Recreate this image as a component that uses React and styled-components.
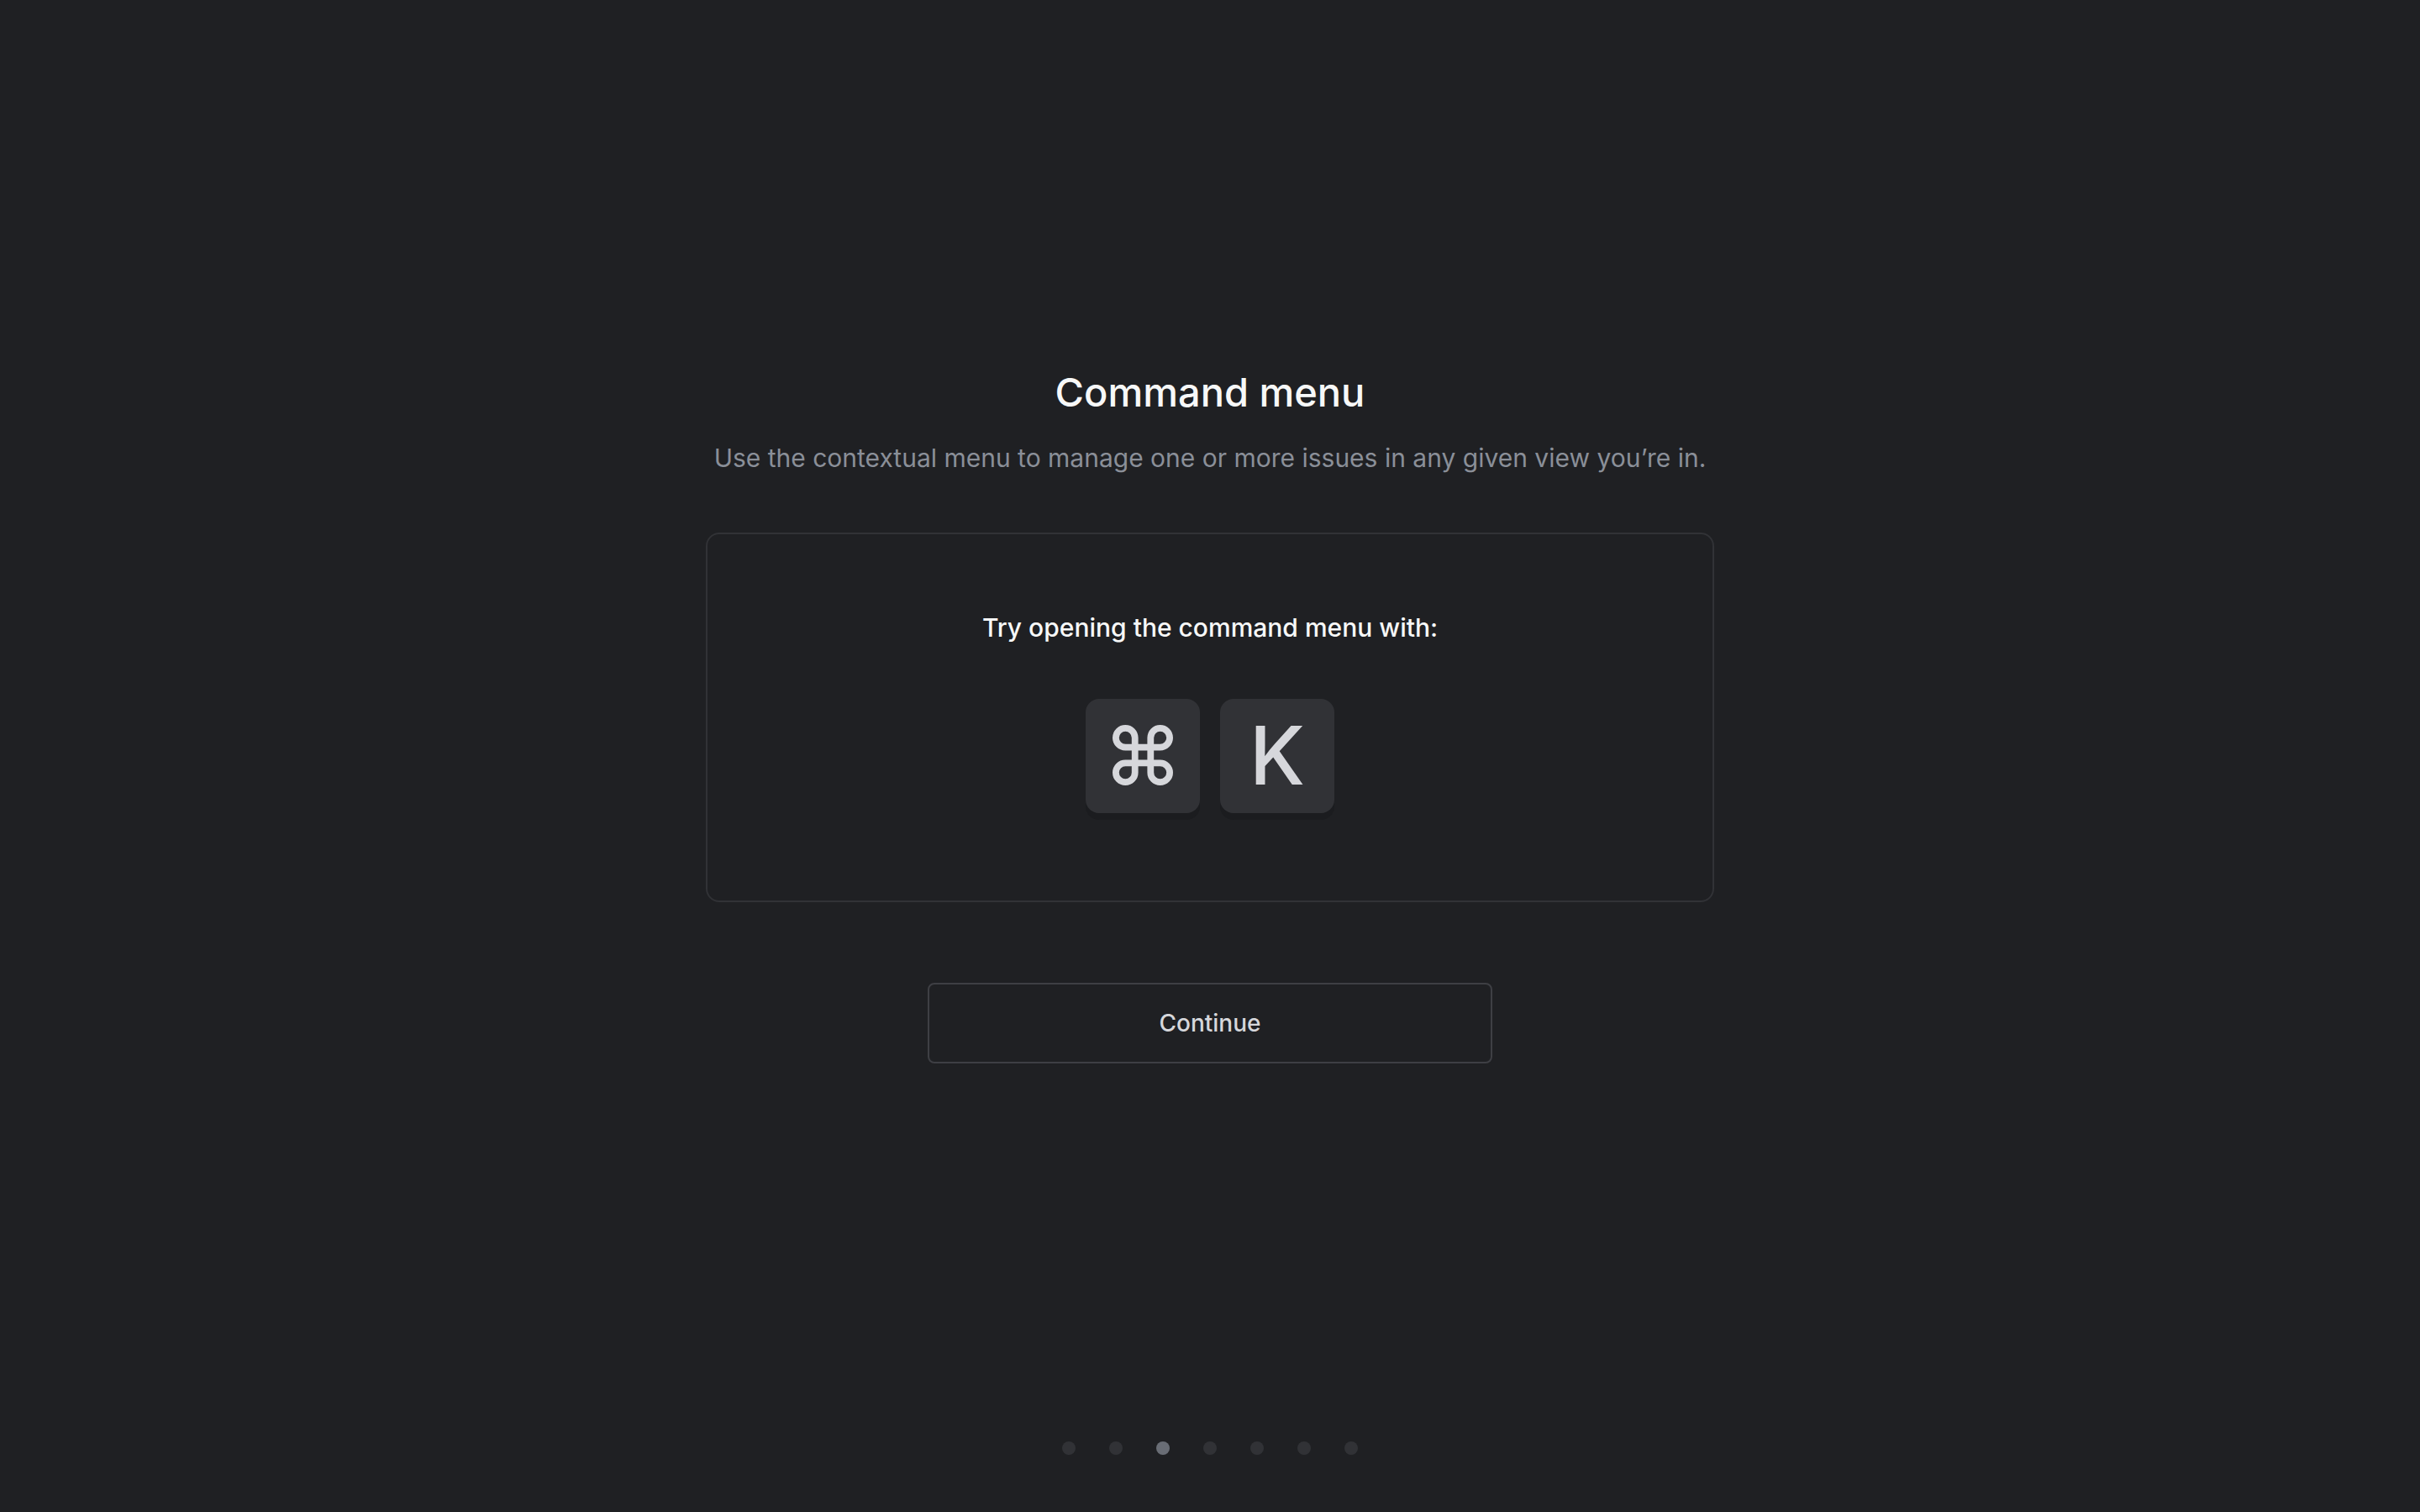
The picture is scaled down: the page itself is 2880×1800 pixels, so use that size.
import React from "react";
import styled, { createGlobalStyle } from "styled-components";

const GlobalStyle = createGlobalStyle`
  *, *::before, *::after {
    box-sizing: border-box;
  }

  body {
    margin: 0;
    background: #1f2023;
    color: #f7f8f8;
    font-family: Inter, "Liberation Sans", sans-serif;
  }
`;

const Page = styled.div`
  display: flex;
  flex-direction: column;
  min-height: 100vh;
`;

const Content = styled.main`
  flex: 1;
  display: flex;
  flex-direction: column;
  align-items: center;
  justify-content: center;
  padding: 0 32px;
`;

const Title = styled.h1`
  margin: 0 0 21px;
  font-size: 47px;
  font-weight: 500;
  line-height: 66px;
`;

const Subtitle = styled.p`
  margin: 0 0 65px;
  color: #8a8f98;
  font-size: 30px;
  line-height: 48px;
  text-align: center;
`;

const Card = styled.section`
  display: flex;
  flex-direction: column;
  align-items: center;
  gap: 61px;
  width: 100%;
  max-width: 1200px;
  margin-bottom: 96px;
  padding: 87px 32px 104px;
  border: 2px solid #313236;
  border-radius: 16px;
`;

const Prompt = styled.p`
  margin: 0;
  font-size: 30px;
  font-weight: 500;
  line-height: 48px;
  text-align: center;
`;

const Keys = styled.div`
  display: flex;
  gap: 24px;
`;

const Key = styled.kbd`
  display: flex;
  align-items: center;
  justify-content: center;
  width: 136px;
  height: 136px;
  padding-bottom: 2px;
  border-radius: 16px;
  background: #313236;
  box-shadow: 0 8px 0 #1b1c1f;
  color: #d6d7db;
  font-family: inherit;
  font-size: 96px;
  font-weight: 500;
  line-height: 134px;
`;

const ContinueButton = styled.button`
  width: 100%;
  max-width: 672px;
  height: 96px;
  padding: 0 32px;
  border: 2px solid #3e3f44;
  border-radius: 8px;
  background: transparent;
  color: #d6d7db;
  font-family: inherit;
  font-size: 28px;
  font-weight: 500;
  cursor: pointer;
`;

const Steps = styled.footer`
  display: flex;
  justify-content: center;
  gap: 40px;
  padding: 16px 32px 68px;
`;

const Dot = styled.span`
  width: 16px;
  height: 16px;
  border-radius: 50%;
  background: ${({ $active }) => ($active ? "#696d75" : "#313236")};
`;

function CommandIcon() {
  return (
    <svg width="72" height="72" viewBox="0 0 72 72" fill="none" stroke="currentColor" strokeWidth="7.8" aria-label="Command" role="img">
      <path d="M26.7 26.7V15.3A11.4 11.4 0 1 0 15.3 26.7H56.7A11.4 11.4 0 1 0 45.3 15.3V56.7A11.4 11.4 0 1 0 56.7 45.3H15.3A11.4 11.4 0 1 0 26.7 56.7Z" />
    </svg>
  );
}

const STEPS = 7;
const CURRENT_STEP = 2;

export default function App() {
  return (
    <>
      <GlobalStyle />
      <Page>
        <Content>
          <Title>Command menu</Title>
          <Subtitle>Use the contextual menu to manage one or more issues in any given view you’re in.</Subtitle>
          <Card>
            <Prompt>Try opening the command menu with:</Prompt>
            <Keys>
              <Key>
                <CommandIcon />
              </Key>
              <Key>K</Key>
            </Keys>
          </Card>
          <ContinueButton type="button">Continue</ContinueButton>
        </Content>
        <Steps>
          {Array.from({ length: STEPS }, (_, i) => (
            <Dot key={i} $active={i === CURRENT_STEP} />
          ))}
        </Steps>
      </Page>
    </>
  );
}
